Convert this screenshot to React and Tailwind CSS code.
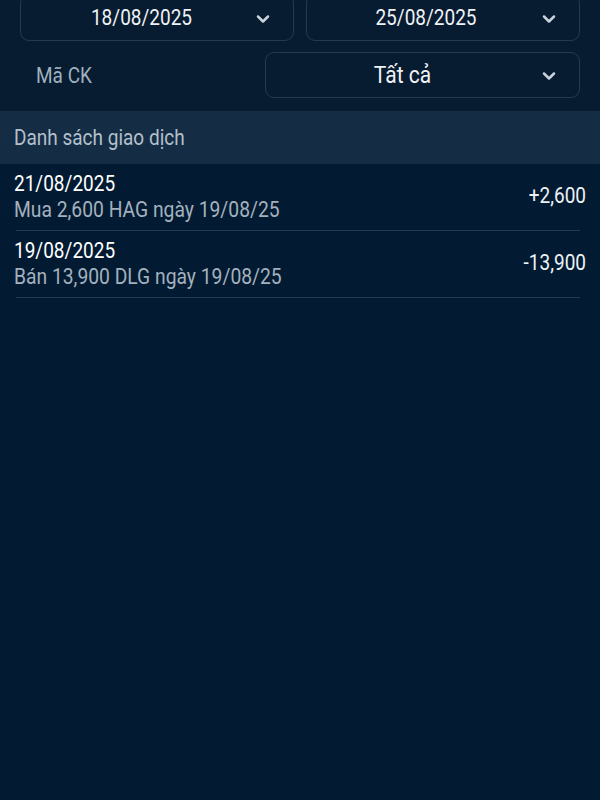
import { ChevronDown } from 'lucide-react';

const font = { fontFamily: 'Roboto, "Noto Sans", sans-serif' };

const transactions = [
  { date: '21/08/2025', desc: 'Mua 2,600 HAG ngày 19/08/25', amount: '+2,600' },
  { date: '19/08/2025', desc: 'Bán 13,900 DLG ngày 19/08/25', amount: '-13,900' },
];

// chữ trong ảnh gốc bị kéo giãn theo chiều dọc
const T = ({ className = '', children }) => (
  <span className={`inline-block scale-y-[1.18] ${className}`}>{children}</span>
);

const SelectBox = ({ value, className = '', textClass = 'text-[19px]', shift = 'pr-[31px]' }) => (
  <div className={`relative flex items-center justify-center border border-[#26394f] rounded-[9px] pt-[2px] ${shift} ${className}`}>
    <T className={`${textClass} text-[#eef2f5]`}>{value}</T>
    <ChevronDown className="absolute right-[20px] text-[#c9d2da]" size={20} strokeWidth={3} />
  </div>
);

const App = () => {
  return (
    <div className="w-[600px] h-[800px] overflow-hidden bg-[#021b33]" style={font}>
      {/* Bộ lọc */}
      <div className="bg-[#071b31] px-[20px] pb-[13px]">
        <div className="flex gap-[12px] -mt-[6px]">
          <SelectBox value="18/08/2025" className="w-[274px] h-[47px]" />
          <SelectBox value="25/08/2025" className="w-[274px] h-[47px]" shift="pr-[34px]" />
        </div>
        <div className="flex items-center mt-[11px]">
          <div className="w-[245px] pl-[16px] pt-[2px]">
            <T className="text-[19px] text-[#9fb0bf]">Mã CK</T>
          </div>
          <SelectBox value="Tất cả" className="w-[315px] h-[46px]" textClass="text-[21px]" shift="pr-[40px]" />
        </div>
      </div>

      {/* Danh sách */}
      <div className="h-[53px] bg-[#142c44] flex items-center px-[14px] pt-[2px]">
        <T className="text-[19px] text-[#b3c0cc]">Danh sách giao dịch</T>
      </div>

      <div>
        {transactions.map((t) => (
          <div key={t.date} className="ml-[16px] mr-[20px] h-[67px] border-b border-[#233a52] flex items-center justify-between">
            <div className="-ml-[2px] pt-[1px]">
              <p className="leading-[24px]">
                <T className="text-[19px] text-white">{t.date}</T>
              </p>
              <p className="leading-[26px]">
                <T className="text-[19.3px] text-[#a4b1bd]">{t.desc}</T>
              </p>
            </div>
            <T className="text-[19px] text-[#eef2f5] -mr-[6px] -mt-[2px]">{t.amount}</T>
          </div>
        ))}
      </div>
    </div>
  );
};

export default App;
